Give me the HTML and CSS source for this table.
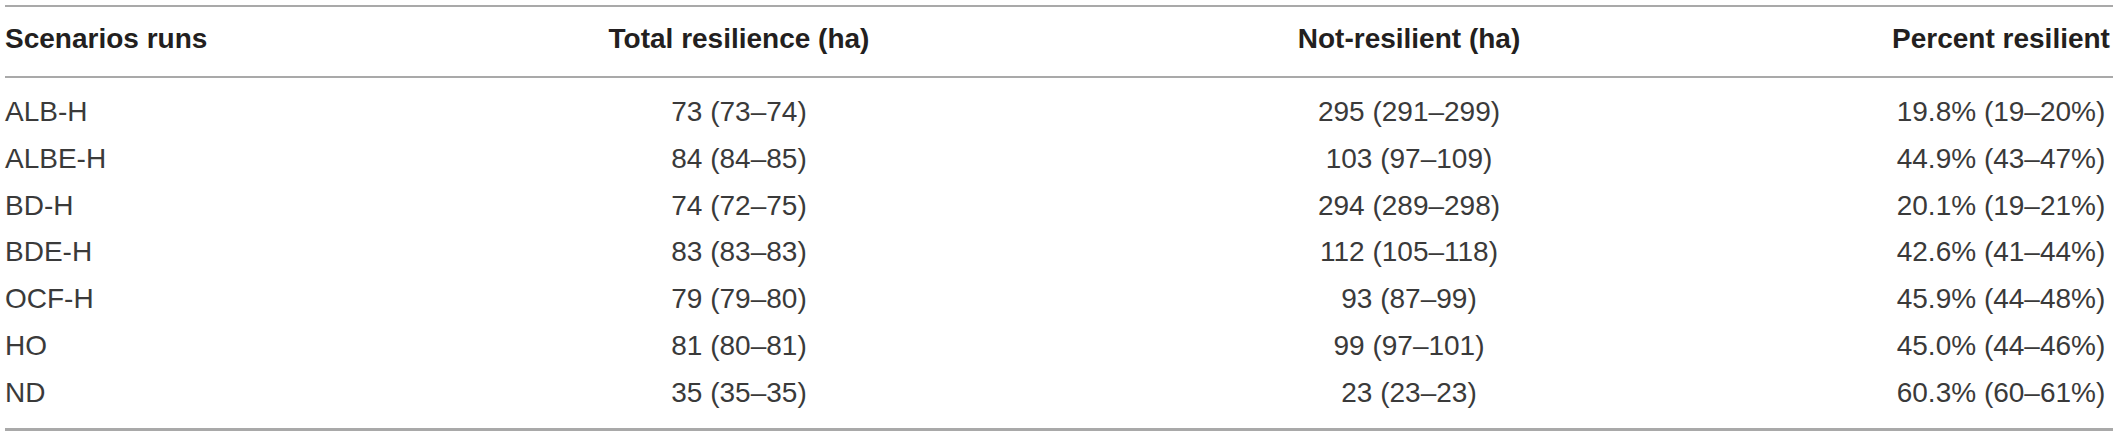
FILE: index.html
```html
<!DOCTYPE html>
<html lang="en">
<head>
<meta charset="utf-8">
<title>Scenario resilience</title>
<link rel="stylesheet" href="styles.css">
</head>
<body>
<table class="data-table">
  <colgroup>
    <col class="c1"><col class="c2"><col class="c3"><col class="c4">
  </colgroup>
  <thead>
    <tr>
      <th class="left">Scenarios runs</th>
      <th>Total resilience (ha)</th>
      <th>Not-resilient (ha)</th>
      <th>Percent resilient</th>
    </tr>
  </thead>
  <tbody>
    <tr><td class="left">ALB-H</td><td>73 (73–74)</td><td>295 (291–299)</td><td>19.8% (19–20%)</td></tr>
    <tr><td class="left">ALBE-H</td><td>84 (84–85)</td><td>103 (97–109)</td><td>44.9% (43–47%)</td></tr>
    <tr><td class="left">BD-H</td><td>74 (72–75)</td><td>294 (289–298)</td><td>20.1% (19–21%)</td></tr>
    <tr><td class="left">BDE-H</td><td>83 (83–83)</td><td>112 (105–118)</td><td>42.6% (41–44%)</td></tr>
    <tr><td class="left">OCF-H</td><td>79 (79–80)</td><td>93 (87–99)</td><td>45.9% (44–48%)</td></tr>
    <tr><td class="left">HO</td><td>81 (80–81)</td><td>99 (97–101)</td><td>45.0% (44–46%)</td></tr>
    <tr><td class="left">ND</td><td>35 (35–35)</td><td>23 (23–23)</td><td>60.3% (60–61%)</td></tr>
  </tbody>
</table>
</body>
</html>
```
FILE: styles.css
```css
html, body {
  margin: 0;
  padding: 0;
  background: #ffffff;
}

body {
  font-family: "Liberation Sans", Arial, Helvetica, sans-serif;
}

.data-table {
  margin: 5px 0 0 5px;
  width: 2108px;
  table-layout: fixed;
  border-collapse: collapse;
  border-top: 2px solid #a9a9a9;
  border-bottom: 3px solid #a9a9a9;
}

.c1 { width: 544px; }
.c2 { width: 380px; }
.c3 { width: 960px; }
.c4 { width: 224px; }

.data-table th,
.data-table td {
  padding: 0;
  font-size: 28px;
  line-height: 32px;
  text-align: center;
  white-space: nowrap;
}

.data-table th {
  font-weight: bold;
  color: #231f20;
  padding-top: 16px;
  padding-bottom: 21px;
  border-bottom: 2px solid #a9a9a9;
}

.data-table td {
  font-weight: normal;
  color: #3a3a3a;
  padding-top: 7.4px;
  padding-bottom: 7.4px;
}

.data-table tbody tr:first-child td {
  padding-top: 18px;
}

.data-table tbody tr:last-child td {
  padding-bottom: 19.7px;
}

.data-table .left {
  text-align: left;
}
```
